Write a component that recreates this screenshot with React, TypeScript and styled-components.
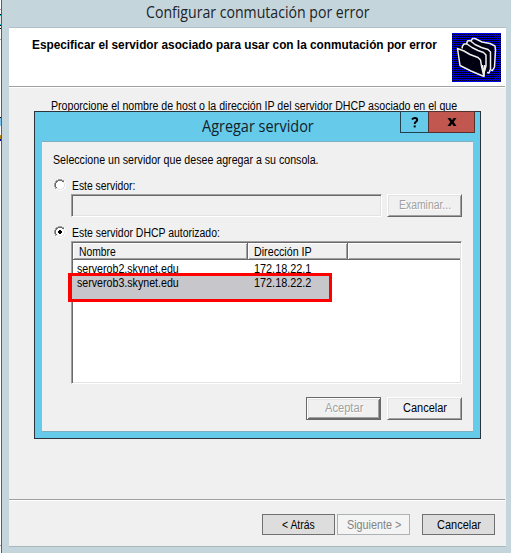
import React, { useLayoutEffect, useRef, useState } from "react";
import styled, { createGlobalStyle, css } from "styled-components";

const GlobalStyle = createGlobalStyle`
  * { box-sizing: border-box; }
  html, body { margin: 0; padding: 0; overflow: hidden; }
  body { font: 12px/14px "Liberation Sans", Arial, sans-serif; color: #000; background: #c4d6dc; }
`;

/* Text condensed horizontally to the width of the system bitmap font. */
const FitBox = styled.span<{ $w: number }>`
  display: block;
  flex: none;
  width: ${(p) => p.$w}px;
  white-space: nowrap;
`;
const FitInner = styled.span`
  display: inline-block;
  vertical-align: top;
  transform-origin: 0 0;
`;

function Fit({ w, children }: { w: number; children: string }) {
  const ref = useRef<HTMLSpanElement>(null);
  const [scale, setScale] = useState(1);
  useLayoutEffect(() => {
    if (ref.current) setScale(w / ref.current.offsetWidth);
  }, [w, children]);
  return (
    <FitBox $w={w}>
      <FitInner ref={ref} style={{ transform: `scaleX(${scale})` }}>{children}</FitInner>
    </FitBox>
  );
}

const Screen = styled.div`
  display: flex;
  width: 511px;
  height: 553px;
  overflow: hidden;
`;

const Backdrop = styled.div`
  flex: none;
  width: 1px;
  background: linear-gradient(
    #fff 9px, #a0a0a0 9px 10px, #fff 10px 14px, #000 14px 15px, #00e0e8 15px 16px,
    #e4e4e4 16px 24px, #00e0e8 24px 25px, #000 25px 26px, #fff 26px 28px, #000 28px 29px,
    #fff 29px 39px, #a0a0a0 39px 40px, #fff 40px 117px, #000 117px 118px, #7cc8f4 118px 126px,
    #fff 126px 135px, #b8860b 135px 139px, #000080 139px 141px, #fff 141px 545px, #a0a0a0 545px 546px, #fff 546px
  );
`;

const Wizard = styled.div`
  flex: 1;
  display: flex;
  flex-direction: column;
  border-left: 1px solid #536069;
  padding: 0 5px 0 7px;
  background: #c4d6dc;
`;

const WizardTitle = styled.div`
  height: 27px;
  padding: 1px 0 0 137px;
  font: 16px/22px "Open Sans", "Noto Sans", sans-serif;
  color: #1c2226;
`;

const WizardClient = styled.div`
  display: flex;
  flex-direction: column;
  width: 497px;
  height: 520px;
  border-top: 1px solid #b0c0c6;
  border-bottom: 1px solid #a9b8be;
  background: #f0f0f0;
`;

const Banner = styled.div`
  display: flex;
  justify-content: space-between;
  height: 58px;
  padding: 5px 5px 0 23px;
  background: #fff;
  font-weight: bold;
`;
const BannerText = styled.div`
  padding-top: 5px;
`;

const Etched = styled.div`
  flex: none;
  width: 496px;
  height: 2px;
  border-top: 1px solid #a0a0a0;
  border-bottom: 1px solid #fff;
`;

const Body = styled.div`
  flex: none;
  height: 411px;
  padding: 11px 0 0 42px;
`;

const WizardActions = styled.div`
  display: flex;
  padding: 13px 0 0 253px;
`;
const FlatButton = styled.button<{ $gap?: number }>`
  display: flex;
  justify-content: center;
  width: 73px;
  height: 21px;
  margin: 0 0 0 ${(p) => p.$gap ?? 0}px;
  padding: 3px 0 0;
  border: 1px solid #707070;
  background: #dddddd;
  font: inherit;
  color: #000;
  &:disabled { border-color: #adb2b5; background: #f4f4f4; color: #838383; }
`;

/* Modal window floating above the wizard page. */
const Dialog = styled.div`
  position: absolute;
  left: 34px;
  top: 111px;
  width: 447px;
  height: 328px;
  padding: 0 7px;
  border: 1px solid #2b3439;
  background: #66caea;
`;
const DialogTitle = styled.div`
  display: flex;
  justify-content: space-between;
  height: 29px;
  padding-left: 160px;
  font: 16px/22px "Open Sans", "Noto Sans", sans-serif;
  color: #10222b;
`;
const TitleText = styled.div`
  padding-top: 3px;
`;
const Caption = styled.div`
  display: flex;
  flex: none;
  width: 75px;
  height: 22px;
  margin: -1px -2px 0 0;
`;
const CaptionButton = styled.div<{ $close?: boolean }>`
  display: flex;
  align-items: center;
  justify-content: center;
  width: ${(p) => (p.$close ? 47 : 29)}px;
  margin-left: ${(p) => (p.$close ? -1 : 0)}px;
  border: 1px solid ${(p) => (p.$close ? "#54302e" : "#22424f")};
  background: ${(p) => (p.$close ? "#c2574f" : "#66caea")};
`;
const DialogClient = styled.div`
  display: flex;
  flex-direction: column;
  width: 431px;
  height: 291px;
  padding: 11px 11px 0;
  border-top: 1px solid #7fb0c2;
  border-bottom: 1px solid #7fb0c2;
  background: #f0f0f0;
`;

const RadioRow = styled.div<{ $top: number }>`
  display: flex;
  gap: 6px;
  height: 15px;
  margin-top: ${(p) => p.$top}px;
  padding-left: 1px;
`;
const FieldRow = styled.div`
  display: flex;
  gap: 5px;
  margin: 0 0 0 18px;
`;
const sunken = css`
  border: 1px solid;
  border-color: #a0a0a0 #fff #fff #a0a0a0;
  box-shadow: inset 1px 1px #696969, inset -1px -1px #e3e3e3;
`;
const Field = styled.div`
  ${sunken}
  width: 311px;
  height: 23px;
`;
const RaisedButton = styled.button<{ $default?: boolean }>`
  display: flex;
  justify-content: center;
  width: 75px;
  height: 23px;
  padding: 3px 0 0;
  border: 1px solid;
  border-color: #fff #696969 #696969 #fff;
  box-shadow: inset 1px 1px #e3e3e3, inset -1px -1px #a0a0a0;
  background: #f0f0f0;
  font: inherit;
  color: #000;
  &:disabled { color: #a0a0a0; text-shadow: 1px 1px #fff; }
  ${(p) => p.$default && css`
    border-color: #696969;
    box-shadow: inset 1px 1px #fff, inset -1px -1px #696969, inset 2px 2px #e3e3e3, inset -2px -2px #a0a0a0;
  `}
`;

const List = styled.div`
  ${sunken}
  position: relative;
  width: 391px;
  height: 143px;
  margin: 0 0 0 18px;
  padding: 1px;
  background: #fff;
`;
const Columns = styled.div`
  display: flex;
  height: 17px;
  border-bottom: 1px solid #696969;
`;
const Column = styled.div<{ $w: number }>`
  width: ${(p) => p.$w}px;
  padding: 2px 0 0 6px;
  border-right: 1px solid #696969;
  box-shadow: inset 1px 1px #fff, inset -1px -1px #a0a0a0;
  background: #f0f0f0;
  &:last-child { border-right: 0; box-shadow: inset 1px 1px #fff, inset 0 -1px #a0a0a0; }
`;
const Rows = styled.div`
  padding: 2px 0 0 4px;
`;
const Row = styled.div`
  display: flex;
  gap: 75px;
  height: 14px;
`;
/* Hand-drawn highlight laid over the list, around the selected row. */
const Marker = styled.div`
  position: absolute;
  left: -4px;
  top: 31px;
  width: 264px;
  height: 29px;
  border: 3px solid #fe0000;
  border-left-width: 4px;
  background: #c7c6cb;
`;
const MarkedRow = styled(Row)`
  position: relative;
  margin-left: 4px;
`;
const DialogActions = styled.div`
  display: flex;
  justify-content: flex-end;
  gap: 6px;
  margin-top: 13px;
`;

function Radio({ on }: { on?: boolean }) {
  return (
    <svg width="12" height="12" viewBox="0 0 12 12" shapeRendering="crispEdges">
      <path fill="#fff" d="M4 2h4v1h1v1h1v4h-1v1h-1v1h-4v-1h-1v-1h-1v-4h1v-1h1z" />
      <path fill="#a0a0a0" d="M4 0h4v1h-4zM2 1h2v1h-2zM8 1h2v1h-2zM1 2h1v2h-1zM0 4h1v4h-1zM1 8h1v2h-1z" />
      <path fill="#696969" d="M4 1h4v1h-4zM2 2h2v1h-2zM8 2h2v1h-2zM2 3h1v1h-1zM1 4h1v4h-1zM2 8h1v1h-1z" />
      <path fill="#e3e3e3" d="M9 3h1v1h-1zM10 4h1v4h-1zM9 8h1v1h-1zM2 9h2v1h-2zM8 9h2v1h-2zM4 10h4v1h-4z" />
      <path fill="#fff" d="M10 2h1v2h-1zM11 4h1v4h-1zM10 8h1v2h-1zM2 10h2v1h-2zM8 10h2v1h-2zM4 11h4v1h-4z" />
      {on && <path fill="#000" d="M5 4h2v1h1v2h-1v1h-2v-1h-1v-2h1z" />}
    </svg>
  );
}

function Folders() {
  return (
    <svg width="49" height="49" viewBox="0 0 49 49">
      <defs>
        <pattern id="dither" width="2" height="2" patternUnits="userSpaceOnUse">
          <rect width="2" height="2" fill="#000014" />
          <rect width="1" height="1" fill="#0000e8" />
        </pattern>
        <pattern id="check" width="2" height="2" patternUnits="userSpaceOnUse">
          <rect width="2" height="2" fill="#000020" />
          <path d="M0 0h1v1h-1zM1 1h1v1h-1z" fill="#0000f8" />
        </pattern>
      </defs>
      <rect width="49" height="49" fill="url(#check)" shapeRendering="crispEdges" />
      <path d="M7 2H42L47 9V40L41 47H8L2 40V9Z" fill="url(#dither)" shapeRendering="crispEdges" />
      <path d="M5 15L19 7L30 9L41 14V34L32 43L7 33Z" fill="#000010" />
      <g fill="none" stroke="#f0f0f0" strokeWidth="1.5" strokeLinejoin="round">
        <path d="M19 8L20.5 5.5L23 5.5L30 9L38 10.5L43 13L43.5 17L42.5 34L40.5 37.5L39 37" />
        <path d="M14.5 11L15.5 8L18 7.5L23 11.5L29.5 14.5L36 16.5L38.5 19V36L37 40L35 39.5" />
        <path d="M10 15.5L10.5 13L12 11L15 11L20 14.5L26 17.5L31.5 19.5L34 22V33L32.5 38" />
        <path d="M5.5 15.5L12 18L18 21.5L26 24.5L28.5 27L29.5 33L32 43.5L19 38L8 32.5Z" />
        <path d="M30.5 32L32 43M32.8 32L32 43" />
      </g>
    </svg>
  );
}

export default function App() {
  return (
    <>
      <GlobalStyle />
      <Screen>
        <Backdrop />
        <Wizard>
          <WizardTitle><Fit w={224}>Configurar conmutación por error</Fit></WizardTitle>
          <WizardClient>
            <Banner>
              <BannerText>
                <Fit w={405}>Especificar el servidor asociado para usar con la conmutación por error</Fit>
              </BannerText>
              <Folders />
            </Banner>
            <Etched />
            <Body>
              <Fit w={406}>Proporcione el nombre de host o la dirección IP del servidor DHCP asociado en el que</Fit>
            </Body>
            <Etched />
            <WizardActions>
              <FlatButton><Fit w={33}>{"< Atrás"}</Fit></FlatButton>
              <FlatButton $gap={2} disabled><Fit w={54}>{"Siguiente >"}</Fit></FlatButton>
              <FlatButton $gap={12}><Fit w={44}>Cancelar</Fit></FlatButton>
            </WizardActions>
          </WizardClient>
        </Wizard>
      </Screen>

      <Dialog>
        <DialogTitle>
          <TitleText><Fit w={112}>Agregar servidor</Fit></TitleText>
          <Caption>
            <CaptionButton>
              <svg width="8" height="11" viewBox="0 0 8 11">
                <path d="M1 2.6Q2 1 4 1Q6.2 1 6.2 2.9Q6.2 4 4.8 4.9Q3.7 5.6 3.7 7" fill="none" stroke="#000" strokeWidth="1.9" />
                <path d="M2.7 8.4h2v2h-2z" />
              </svg>
            </CaptionButton>
            <CaptionButton $close>
              <svg width="10" height="8" viewBox="0 0 10 8">
                <path d="M0.5 0H3.5L5 2.3L6.5 0H9.5L6.7 4L9.5 8H6.5L5 5.7L3.5 8H0.5L3.3 4Z" />
              </svg>
            </CaptionButton>
          </Caption>
        </DialogTitle>
        <DialogClient>
          <Fit w={266}>Seleccione un servidor que desee agregar a su consola.</Fit>
          <RadioRow $top={12}>
            <Radio />
            <Fit w={63}>Este servidor:</Fit>
          </RadioRow>
          <FieldRow>
            <Field />
            <RaisedButton disabled><Fit w={52}>Examinar...</Fit></RaisedButton>
          </FieldRow>
          <RadioRow $top={9}>
            <Radio on />
            <Fit w={148}>Este servidor DHCP autorizado:</Fit>
          </RadioRow>
          <List>
            <Columns>
              <Column $w={175}><Fit w={37}>Nombre</Fit></Column>
              <Column $w={100}><Fit w={58}>Dirección IP</Fit></Column>
              <Column $w={112} />
            </Columns>
            <Rows>
              <Row><Fit w={102}>serverob2.skynet.edu</Fit><Fit w={57}>172.18.22.1</Fit></Row>
            </Rows>
            <Marker />
            <MarkedRow><Fit w={102}>serverob3.skynet.edu</Fit><Fit w={57}>172.18.22.2</Fit></MarkedRow>
          </List>
          <DialogActions>
            <RaisedButton $default disabled><Fit w={38}>Aceptar</Fit></RaisedButton>
            <RaisedButton><Fit w={44}>Cancelar</Fit></RaisedButton>
          </DialogActions>
        </DialogClient>
      </Dialog>
    </>
  );
}
